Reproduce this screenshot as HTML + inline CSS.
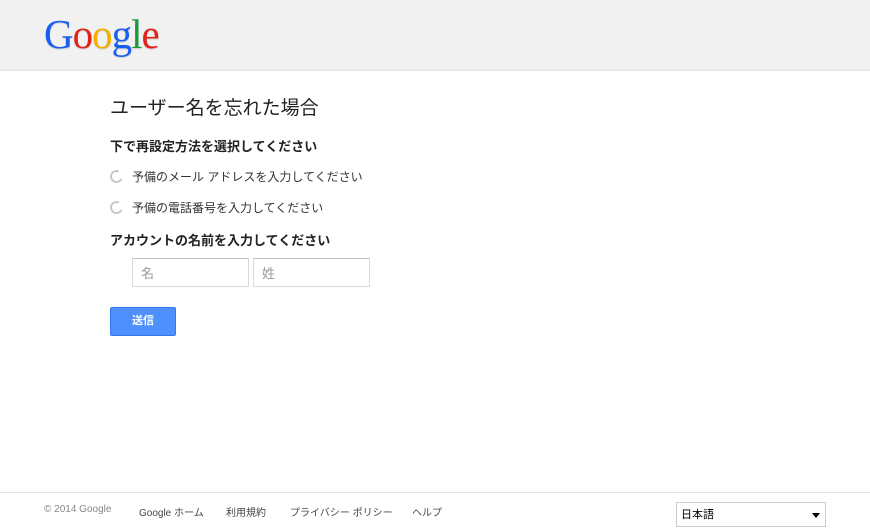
<!DOCTYPE html>
<html><head><meta charset="utf-8">
<style>
*{margin:0;padding:0;box-sizing:border-box}
body{width:870px;height:528px;background:#fff;font-family:"Liberation Sans","Noto Sans CJK JP",sans-serif;color:#222;position:relative;overflow:hidden}
.hdr{position:absolute;left:0;top:0;width:870px;height:71px;background:#f1f1f1;border-bottom:1px solid #e5e5e5}
.logo{position:absolute;left:44px;top:10px;font-family:"Liberation Serif",serif;font-size:41px;letter-spacing:-1px;text-shadow:0 1px 1px rgba(0,0,0,.15)}
.abs{position:absolute;white-space:nowrap}
h1{font-weight:normal;font-size:19px;color:#222}
.b{font-weight:bold;font-size:13px;color:#222}
.r{font-size:12px;color:#333}
.radio{position:absolute;width:13px;height:13px;border-radius:50%;border:2px solid #c8c8c8;border-right-color:#fff;transform:rotate(-20deg)}
.in{position:absolute;height:29px;border:1px solid #d9d9d9;border-top-color:#c0c0c0;font-size:13px;color:#999;padding:4px 8px}
.btn{position:absolute;left:110px;top:307px;width:66px;height:29px;background:#4d90fe;border:1px solid #3079ed;border-radius:2px;color:#fff;font-weight:bold;font-size:11px;text-align:center;line-height:27px}
.ft{position:absolute;left:0;top:492px;width:870px;border-top:1px solid #e5e5e5}
.f{font-size:10px;color:#444}
.sel{position:absolute;left:676px;top:502px;width:150px;height:25px;border:1px solid #ccc;font-size:11px;color:#000;padding:3px 4px}
</style></head><body>
<div class="hdr"><div class="logo"><span style="color:#1a5ff0">G</span><span style="color:#e0241a">o</span><span style="color:#f2b000">o</span><span style="color:#1a5ff0">g</span><span style="color:#1a9a3a">l</span><span style="color:#e0241a">e</span></div></div>
<h1 class="abs" style="left:110px;top:93px">ユーザー名を忘れた場合</h1>
<div class="abs b" style="left:110px;top:136px">下で再設定方法を選択してください</div>
<div class="radio" style="left:110px;top:170px"></div>
<div class="abs r" style="left:132px;top:168px">予備のメール アドレスを入力してください</div>
<div class="radio" style="left:110px;top:201px"></div>
<div class="abs r" style="left:132px;top:199px">予備の電話番号を入力してください</div>
<div class="abs b" style="left:110px;top:230px">アカウントの名前を入力してください</div>
<div class="in" style="left:132px;top:258px;width:117px">名</div>
<div class="in" style="left:253px;top:258px;width:117px">姓</div>
<div class="btn">送信</div>
<div class="ft"></div>
<div class="abs f" style="left:44px;top:504px;color:#888">© 2014 Google</div>
<div class="abs f" style="left:139px;top:504px">Google ホーム</div>
<div class="abs f" style="left:226px;top:504px">利用規約</div>
<div class="abs f" style="left:290px;top:504px">プライバシー ポリシー</div>
<div class="abs f" style="left:412px;top:504px">ヘルプ</div>
<div class="sel">日本語<span style="position:absolute;right:5px;top:10px;width:0;height:0;border-left:4px solid transparent;border-right:4px solid transparent;border-top:5px solid #000"></span></div>
</body></html>
